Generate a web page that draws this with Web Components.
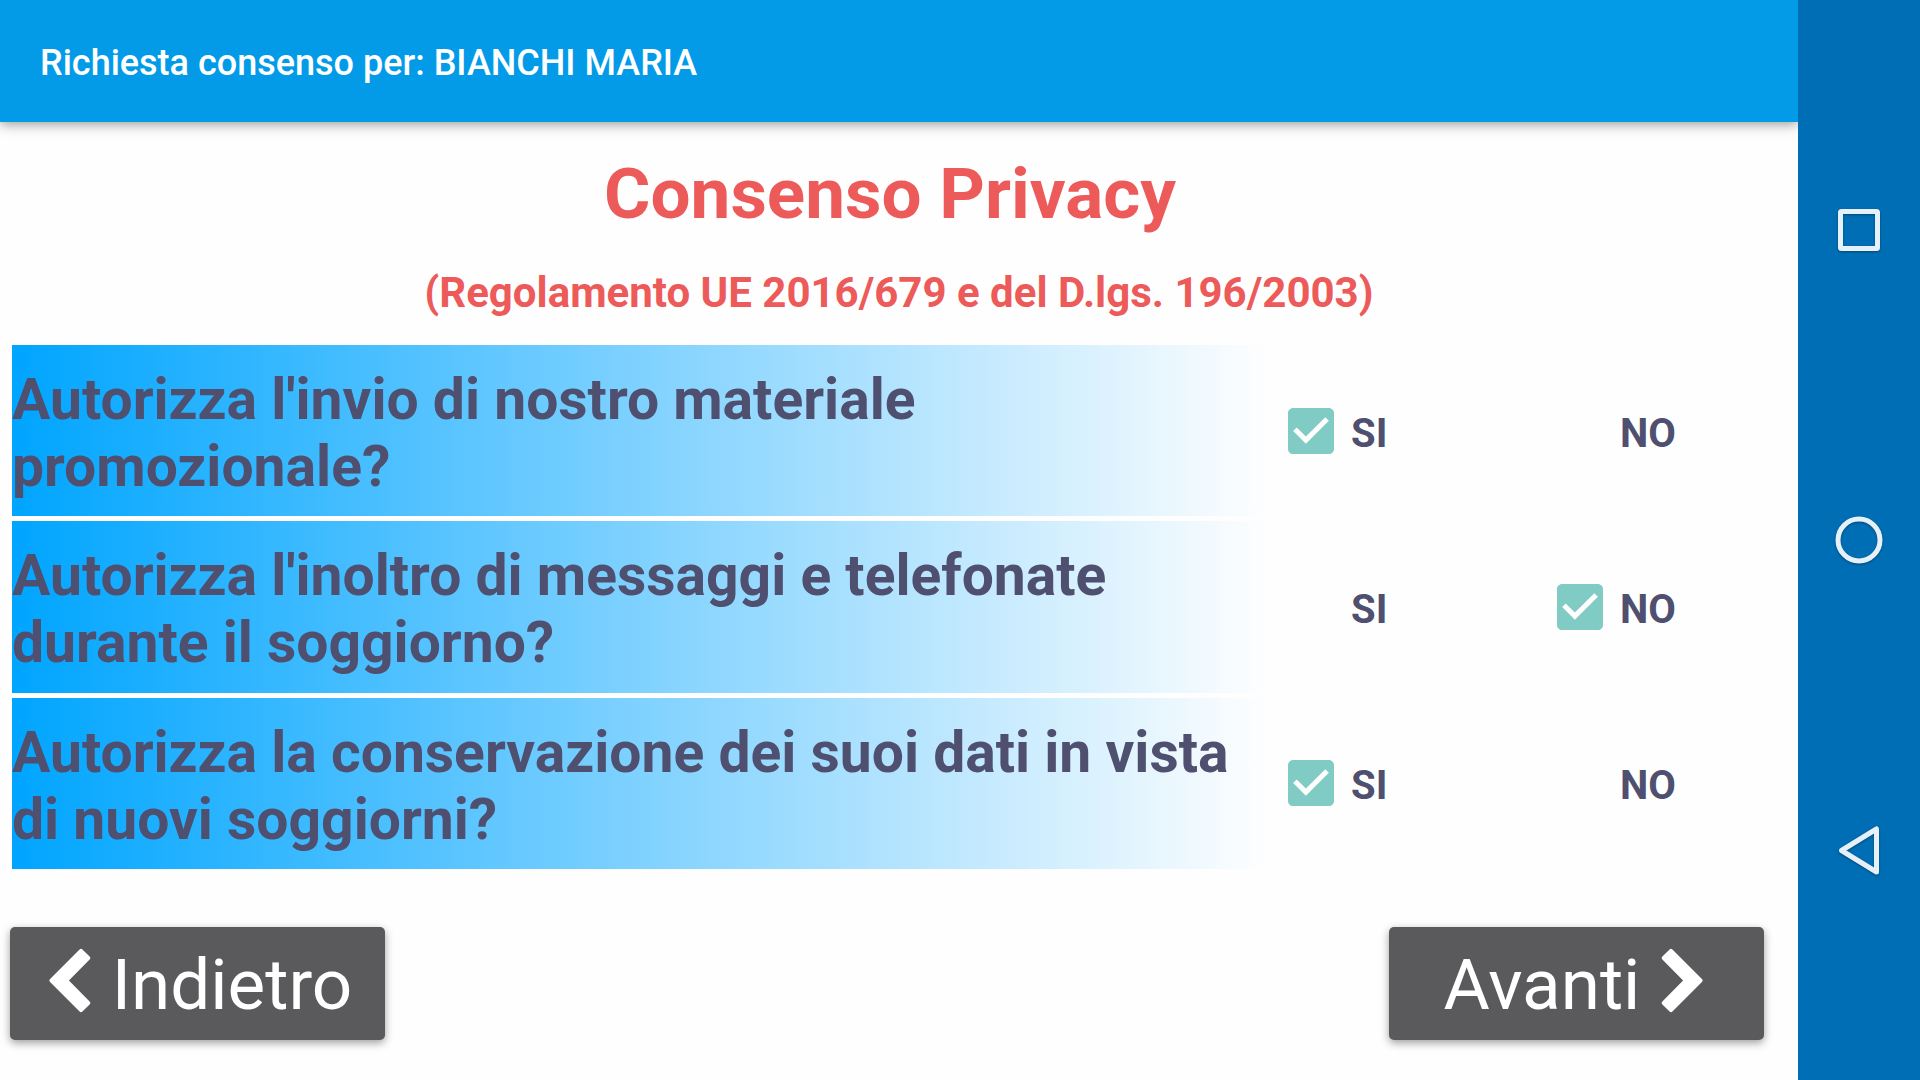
<!DOCTYPE html>
<html lang="it">
<head>
<meta charset="utf-8">
<title>Consenso Privacy</title>
<style>
  html, body { height: 100%; margin: 0; }
  body { font-family: Roboto, sans-serif; background: #fefefe; color: #4f4f6f; }
</style>
</head>
<body>
<consent-app></consent-app>
<script>
function define(name, html, setup) {
  const template = document.createElement('template');
  template.innerHTML = html;
  customElements.define(name, class extends HTMLElement {
    connectedCallback() {
      if (this.shadowRoot) return;
      const root = this.attachShadow({ mode: 'open' });
      root.append(template.content.cloneNode(true));
      if (setup) setup(this, root);
    }
  });
}

define('app-header', `
  <style>
    :host { display: block; background: #039be8; color: #fff; box-shadow: 0 2px 12px rgba(0,0,0,.42); }
    header { display: flex; align-items: center; box-sizing: border-box; height: 122px; padding: 4px 40px 0; }
    h1 { margin: 0; font-size: 36px; line-height: 44px; font-weight: 500; }
  </style>
  <header><h1><slot></slot></h1></header>`);

define('consent-heading', `
  <style>
    :host { display: block; text-align: center; color: #ed5a5a; }
    h2, p { margin: 0; font-weight: 700; }
    h2 { font-size: 71px; line-height: 84px; padding-right: 18px; }
    p { font-size: 42px; line-height: 52px; margin-top: 31px; }
  </style>
  <h2><slot></slot></h2>
  <p><slot name="law"></slot></p>`);

define('consent-option', `
  <style>
    :host { display: block; }
    label { display: flex; align-items: center; gap: 17px; font-size: 40px; line-height: 48px; font-weight: 700; }
    .box { display: grid; width: 46px; height: 46px; }
    input, svg { grid-area: 1 / 1; width: 46px; height: 46px; margin: 0; }
    input { appearance: none; }
    svg { fill: #80cbc4; visibility: hidden; pointer-events: none; }
    input:checked + svg { visibility: visible; }
    .text { margin: 5px 0 -1px; }
  </style>
  <label>
    <span class="box">
      <input type="checkbox">
      <svg viewBox="3 3 18 18"><path d="M19 3H5c-1.11 0-2 .9-2 2v14c0 1.1.89 2 2 2h14c1.11 0 2-.9 2-2V5c0-1.1-.89-2-2-2zm-9 14l-5-5 1.41-1.41L10 14.17l7.59-7.59L19 8l-9 9z"/></svg>
    </span>
    <span class="text"><slot></slot></span>
  </label>`, (host, root) => {
    root.querySelector('input').checked = host.hasAttribute('checked');
  });

define('consent-question', `
  <style>
    :host { display: grid; grid-template-columns: 1256fr 269fr 261fr; align-items: stretch; }
    .question { display: flex; align-items: center; background: linear-gradient(90deg, #00a5ff, #fefefe); }
    p { margin: 0; padding-top: 5px; font-size: 57px; line-height: 67px; font-weight: 700; }
    .answer { display: flex; align-items: center; padding-left: 20px; }
  </style>
  <div class="question"><p><slot></slot></p></div>
  <div class="answer"><slot name="yes"></slot></div>
  <div class="answer"><slot name="no"></slot></div>`);

define('step-button', `
  <style>
    :host { display: block; width: 375px; }
    button { display: flex; align-items: center; justify-content: center; gap: 21px; width: 100%; height: 113px; padding: 2px 0 0 6px;
      border: 0; border-radius: 5px; background: #5a5a5c; color: #fff; font: 400 71px/82px Roboto, sans-serif;
      box-shadow: 0 3px 8px rgba(0,0,0,.38); }
    :host([direction="next"]) button { flex-direction: row-reverse; padding: 2px 6px 0 0; }
    svg { width: 42px; height: 65px; fill: #fff; stroke: #fff; stroke-width: 4; stroke-linejoin: round; margin-bottom: 8px; }
    :host([direction="next"]) svg { transform: scaleX(-1); }
  </style>
  <button type="button">
    <svg viewBox="0 0 42 65" aria-hidden="true"><path d="M2.5 32.5L32 2.8L39.2 10L17 32.5L39.2 55L32 62.2Z"/></svg>
    <span><slot></slot></span>
  </button>`);

define('system-nav', `
  <style>
    :host { display: block; position: relative; background: #006eb4; }
    nav { display: flex; flex-direction: column; box-sizing: border-box; height: 100%; padding: 75px 0; }
    button { flex: 1; display: flex; align-items: center; justify-content: center; border: 0; padding: 0; background: none; }
    svg { width: 56px; height: 56px; fill: none; stroke: #e6f0f8; stroke-width: 5; stroke-linejoin: round;
      filter: drop-shadow(0 1px 1px rgba(0,0,0,.35)); }
  </style>
  <nav>
    <button type="button" aria-label="Recenti"><svg viewBox="0 0 56 56"><rect x="9.5" y="9.5" width="37" height="37" rx="1"/></svg></button>
    <button type="button" aria-label="Home"><svg viewBox="0 0 56 56"><circle cx="28" cy="28" r="21"/></svg></button>
    <button type="button" aria-label="Indietro"><svg viewBox="0 0 56 56"><path d="M10.5 28.5L45.5 7V50Z"/></svg></button>
  </nav>`);

define('consent-app', `
  <style>
    :host { display: grid; grid-template-columns: 1fr 122px; min-height: 100vh; }
    .screen { display: flex; flex-direction: column; min-width: 0; }
    main { flex: 1; display: flex; flex-direction: column; padding: 30px 0 40px; }
    .questions { flex: 1; display: grid; grid-auto-rows: 1fr; gap: 5px; margin: 26px 0 58px; padding: 0 0 0 12px; }
    footer { display: flex; justify-content: space-between; padding: 0 34px 0 10px; }
  </style>
  <div class="screen">
    <app-header>Richiesta consenso per: BIANCHI MARIA</app-header>
    <main>
      <consent-heading>Consenso Privacy<span slot="law">(Regolamento UE 2016/679 e del D.lgs. 196/2003)</span></consent-heading>
      <div class="questions">
        <consent-question>Autorizza l'invio di nostro materiale promozionale?
          <consent-option slot="yes" checked>SI</consent-option><consent-option slot="no">NO</consent-option></consent-question>
        <consent-question>Autorizza l'inoltro di messaggi e telefonate durante il soggiorno?
          <consent-option slot="yes">SI</consent-option><consent-option slot="no" checked>NO</consent-option></consent-question>
        <consent-question>Autorizza la conservazione dei suoi dati in vista di nuovi soggiorni?
          <consent-option slot="yes" checked>SI</consent-option><consent-option slot="no">NO</consent-option></consent-question>
      </div>
      <footer>
        <step-button direction="back">Indietro</step-button>
        <step-button direction="next">Avanti</step-button>
      </footer>
    </main>
  </div>
  <system-nav></system-nav>`);
</script>
</body>
</html>
